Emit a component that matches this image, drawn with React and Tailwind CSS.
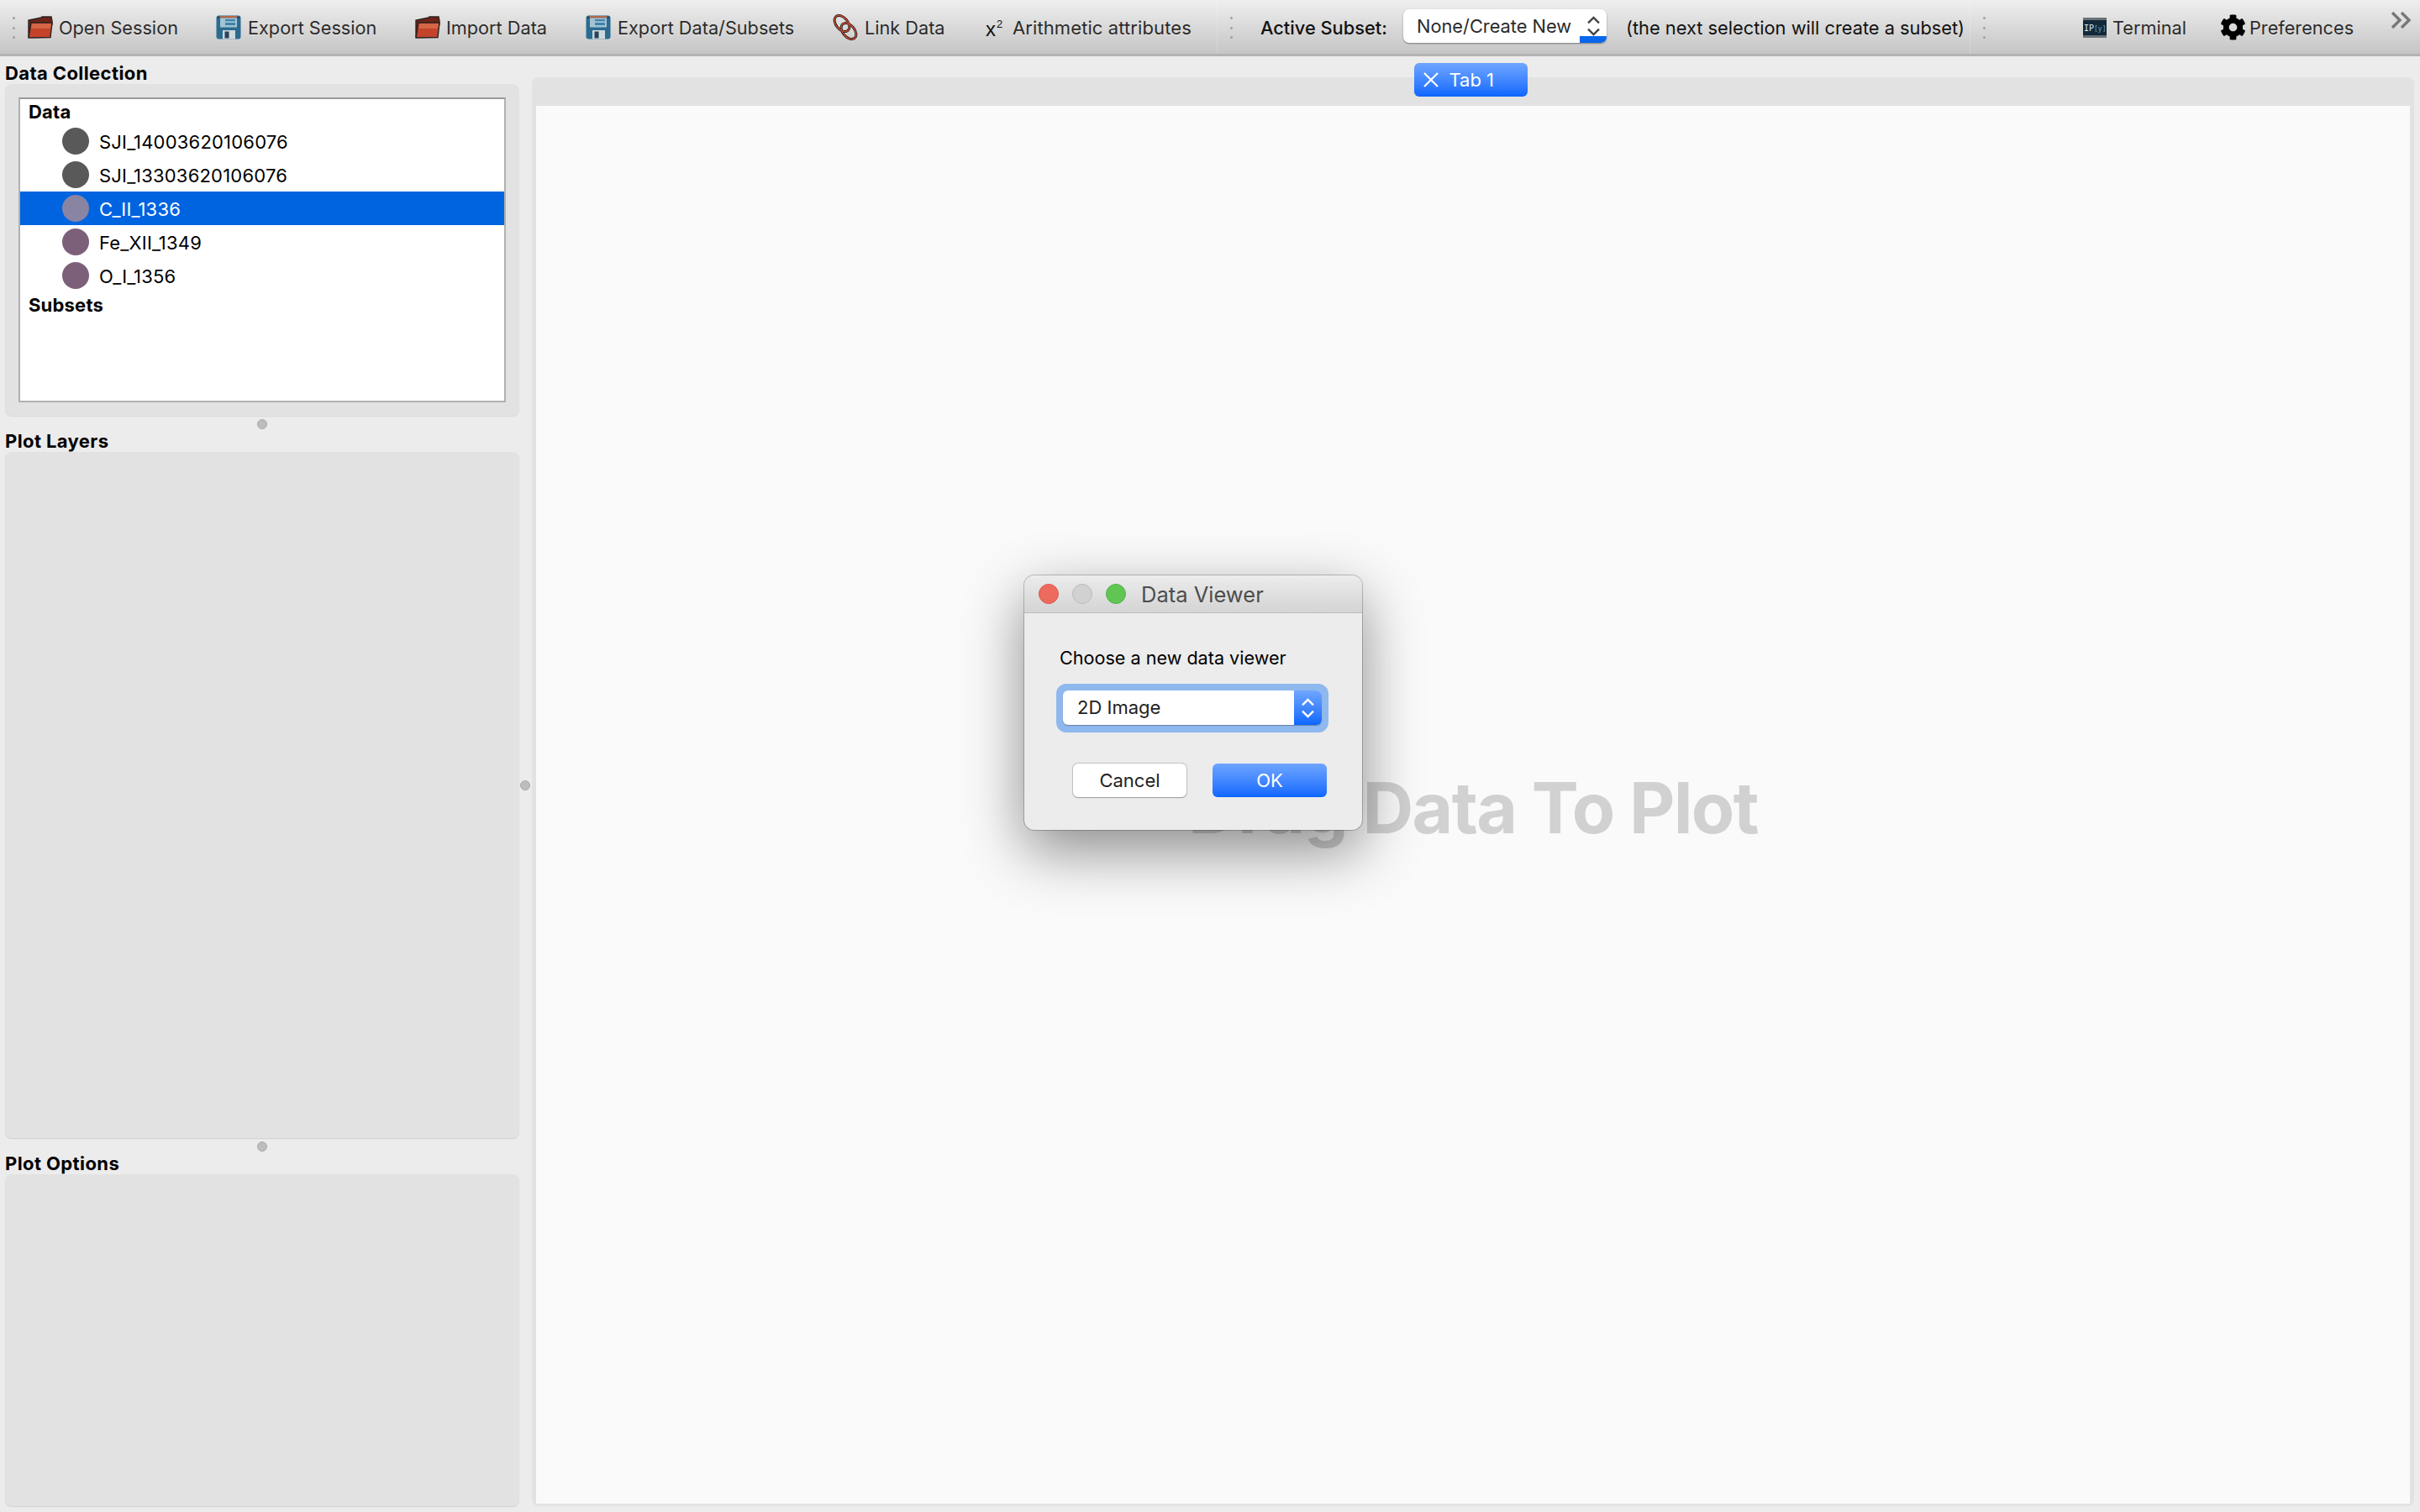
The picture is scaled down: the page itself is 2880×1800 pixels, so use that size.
import { FaCog } from "react-icons/fa";

const DATASETS = [
  { name: "SJI_14003620106076", color: "bg-[#595959]" },
  { name: "SJI_13303620106076", color: "bg-[#595959]" },
  { name: "C_II_1336", color: "bg-[#8a84a3]", selected: true },
  { name: "Fe_XII_1349", color: "bg-[#7c6079]" },
  { name: "O_I_1356", color: "bg-[#7c6079]" },
];

function FolderIcon() {
  return (
    <svg width="30" height="27" viewBox="0 0 30 27" className="shrink-0">
      <path d="M1 25V5l15-3 1-1h11l1 5v4H5z" fill="#6e2317" stroke="#2b2321" strokeWidth="1.4" />
      <path d="M4 8h25l-2 17.5L1 26z" fill="#c4432a" stroke="#2b2321" strokeWidth="1.4" />
      <path d="M5 9h23l-1 6H4z" fill="#d9704f" opacity="0.75" />
    </svg>
  );
}

function FloppyIcon() {
  return (
    <svg width="30" height="29" viewBox="0 0 30 29" className="shrink-0">
      <rect x="0.5" y="0.5" width="29" height="28" rx="3" fill="#2c6b90" />
      <rect x="5" y="1" width="20" height="2.5" fill="#b5694a" />
      <rect x="5" y="3.5" width="20" height="11" fill="#a3c3d4" />
      <rect x="11" y="5" width="12" height="7" fill="#3f83aa" />
      <rect x="11" y="7.5" width="12" height="1.2" fill="#cfe0e8" />
      <rect x="8" y="18" width="15" height="10.5" fill="#cfd8dc" />
      <rect x="10.5" y="19.5" width="5" height="8" fill="#26435a" />
      <circle cx="3" cy="3" r="1" fill="#173a50" />
      <circle cx="27" cy="3" r="1" fill="#173a50" />
    </svg>
  );
}

function LinkIcon() {
  return (
    <svg width="32" height="32" viewBox="0 0 32 32" className="shrink-0">
      <ellipse cx="12" cy="11" rx="7" ry="11" transform="rotate(-40 12 11)" fill="none" stroke="#2a2320" strokeWidth="3" />
      <ellipse cx="20" cy="20" rx="7" ry="11" transform="rotate(-40 20 20)" fill="none" stroke="#2a2320" strokeWidth="3" />
      <ellipse cx="12" cy="11" rx="7" ry="11" transform="rotate(-40 12 11)" fill="none" stroke="#cf4a2e" strokeWidth="1.3" />
      <ellipse cx="20" cy="20" rx="7" ry="11" transform="rotate(-40 20 20)" fill="none" stroke="#cf4a2e" strokeWidth="1.3" />
    </svg>
  );
}

function IPythonIcon() {
  return (
    <svg width="28" height="24" viewBox="0 0 28 24" className="shrink-0">
      <rect width="28" height="24" fill="#12293a" />
      <rect width="28" height="3" fill="#6b7276" />
      <rect y="21" width="28" height="3" fill="#6b7276" />
      <text x="1" y="16" fontFamily="'DejaVu Sans Mono', monospace" fontSize="10" fill="#dfe6ea">IP</text>
      <text x="13" y="16" fontFamily="'DejaVu Sans Mono', monospace" fontSize="8" fill="#6fa5c8">[y]:</text>
    </svg>
  );
}

function UpDown({ className }) {
  return (
    <svg width="15" height="24" viewBox="2 1 16 26" fill="none" stroke="currentColor" strokeWidth="2.6" className={className}>
      <path d="M3 10l7-7 7 7" />
      <path d="M3 18l7 7 7-7" />
    </svg>
  );
}

function Grip() {
  return (
    <div className="flex h-[26px] w-[4px] shrink-0 flex-col items-center justify-between">
      <span className="h-[3px] w-[3px] rounded-full bg-[#a0a0a0]" />
      <span className="h-[3px] w-[3px] rounded-full bg-[#a0a0a0]" />
      <span className="h-[3px] w-[3px] rounded-full bg-[#a0a0a0]" />
    </div>
  );
}

function ToolButton({ icon, label, className = "", gap = "gap-[7px]", width }) {
  return (
    <div className={`flex shrink-0 items-center ${gap} ${className}`}>
      {icon}
      <span className={`whitespace-nowrap text-[21.7px] text-[#2b2b2b] [text-shadow:0_1px_0_rgba(255,255,255,0.35)] ${width}`}>
        {label}
      </span>
    </div>
  );
}

function Toolbar() {
  return (
    <header className="flex h-[67px] shrink-0 border-b-[3px] border-[#b3b3b3] bg-gradient-to-b from-[#efefef] to-[#c5c5c5]">
      <div className="flex w-[1449px] shrink-0 items-center border-r border-white/20 pl-[14px] pt-[2px]">
        <Grip />
        <ToolButton icon={<FolderIcon />} label="Open Session" width="w-[142px]" className="ml-[15px]" />
        <ToolButton icon={<FloppyIcon />} label="Export Session" width="w-[153px]" gap="gap-[8px]" className="ml-[45px]" />
        <ToolButton icon={<FolderIcon />} label="Import Data" width="w-[121px]" className="ml-[46px]" />
        <ToolButton icon={<FloppyIcon />} label="Export Data/Subsets" width="w-[212px]" gap="gap-[8px]" className="ml-[45px]" />
        <ToolButton icon={<LinkIcon />} label="Link Data" width="w-[93px]" className="ml-[43px]" />
        <div className="ml-[51px] flex shrink-0 items-center">
          <span className="flex h-[30px] w-[21px] items-end text-[24px] leading-[26px] text-[#111] [font-family:'Liberation_Sans',sans-serif]">
            x<span className="-translate-y-[13px] pl-[1px] text-[13px] leading-none">2</span>
          </span>
          <span className="ml-[11px] whitespace-nowrap text-[22px] tracking-[0.1px] text-[#2b2b2b] [text-shadow:0_1px_0_rgba(255,255,255,0.35)]">
            Arithmetic attributes
          </span>
        </div>
      </div>
      <div className="flex w-[896px] shrink-0 items-center border-r border-white/20 pl-[14px] pt-[2px]">
        <Grip />
        <span className="ml-[33px] w-[149px] shrink-0 whitespace-nowrap text-[21.8px] font-medium text-[#111]">Active Subset:</span>
        <div className="relative ml-[21px] flex h-[40px] w-[242px] shrink-0 -translate-y-[2px] items-center overflow-hidden rounded-[7px] bg-white pl-[16px] shadow-[0_1px_2px_rgba(0,0,0,0.4)]">
          <span className="whitespace-nowrap text-[21.8px] text-[#2b2b2b]">None/Create New</span>
          <span className="absolute bottom-0 right-0 h-[8px] w-[32px] bg-[#0a66ec]" />
          <UpDown className="relative ml-auto mr-[8px] text-[#444]" />
        </div>
        <span className="ml-[23px] w-[404px] shrink-0 whitespace-nowrap text-[21.8px] text-[#111]">(the next selection will create a subset)</span>
      </div>
      <div className="relative flex min-w-0 flex-1 items-center pl-[14px] pt-[2px]">
        <Grip />
        <ToolButton icon={<IPythonIcon />} label="Terminal" width="w-[85px]" className="ml-[116px]" />
        <ToolButton icon={<FaCog className="h-[31px] w-[31px] text-black" />} label="Preferences" width="w-[125px]" gap="gap-[4px]" className="ml-[43px]" />
        <svg width="28" height="20" viewBox="0 0 28 20" fill="none" stroke="#777" strokeWidth="3.4" className="absolute right-[8px] top-[14px]">
          <path d="M3 1l9 9-9 9M14 1l9 9-9 9" />
        </svg>
      </div>
    </header>
  );
}

function SectionTitle({ children, className = "" }) {
  return <h2 className={`text-[22px] leading-[26px] font-bold tracking-[0.4px] text-black ${className}`}>{children}</h2>;
}

function Handle() {
  return (
    <div className="flex h-[20px] shrink-0 items-center justify-center">
      <span className="h-[12px] w-[12px] rounded-full border border-[#aaa] bg-[#bdbdbd]" />
    </div>
  );
}

function DataList() {
  return (
    <div className="h-[363px] border-2 border-[#b0b0b0] border-t-[#999] bg-white">
      <div className="flex h-[30px] items-center pl-[10px] text-[22px] leading-[26px] font-bold tracking-[0.2px] text-black">Data</div>
      <ul>
        {DATASETS.map((item) => (
          <li
            key={item.name}
            className={`flex h-[40px] items-center pl-[50px] text-[22px] tracking-[0.2px] ${item.selected ? "bg-[#0064e1] text-white" : "text-black"}`}
          >
            <span className={`h-[32px] w-[32px] rounded-full ${item.color}`} />
            <span className="ml-[12px] pt-[2px]">{item.name}</span>
          </li>
        ))}
      </ul>
      <div className="mt-[2px] pl-[10px] text-[22px] leading-[26px] font-bold tracking-[0.2px] text-black">Subsets</div>
    </div>
  );
}

function Sidebar() {
  return (
    <aside className="flex w-[618px] shrink-0 flex-col pl-[6px] pt-[7px]">
      <SectionTitle>Data Collection</SectionTitle>
      <section className="h-[395px] shrink-0 rounded-[8px] bg-[#e2e2e2] px-[16px] pt-[16px] shadow-[0_1px_1px_rgba(0,0,0,0.08)]">
        <DataList />
      </section>
      <Handle />
      <SectionTitle className="-mt-[3px]">Plot Layers</SectionTitle>
      <section className="h-[817px] shrink-0 rounded-[8px] bg-[#e2e2e2] shadow-[0_1px_1px_rgba(0,0,0,0.12)]" />
      <Handle />
      <SectionTitle className="-mt-[3px]">Plot Options</SectionTitle>
      <section className="h-[395px] shrink-0 rounded-[8px] bg-[#e2e2e2] shadow-[0_1px_1px_rgba(0,0,0,0.12)]" />
    </aside>
  );
}

function Workspace() {
  return (
    <main className="flex min-w-0 flex-1 pb-[7px] pl-[15px] pr-[7px] pt-[25px]">
      <div className="flex min-w-0 flex-1 flex-col rounded-[8px] bg-[#e2e2e2] px-[5px] pb-[3px]">
        <div className="flex h-[34px] shrink-0 justify-center">
          <div className="-mt-[17px] ml-[-6px] flex h-[40px] w-[135px] items-center rounded-[6px] bg-gradient-to-b from-[#6ea5ff] to-[#0a66ff] pl-[10px] text-white">
            <svg width="20" height="20" viewBox="0 0 20 20" stroke="currentColor" strokeWidth="2.2">
              <path d="M2 2l16 16M18 2L2 18" />
            </svg>
            <span className="ml-[12px] text-[22px]">Tab 1</span>
          </div>
        </div>
        <div className="flex min-h-0 flex-1 items-center justify-center bg-[#fafafa] pt-[7px]">
          <span className="whitespace-nowrap text-[84px] leading-none font-bold tracking-[-1.6px] text-[#d1d1d1]">Drag Data To Plot</span>
        </div>
      </div>
    </main>
  );
}

function DataViewerDialog() {
  return (
    <div className="absolute left-[1219px] top-[685px] flex h-[303px] w-[402px] flex-col overflow-hidden rounded-[12px] bg-[#ececec] shadow-[0_0_0_1px_rgba(0,0,0,0.22),0_24px_70px_rgba(0,0,0,0.45)]">
      <div className="flex h-[45px] shrink-0 items-center border-b border-[#bdbdbd] bg-gradient-to-b from-[#ececec] to-[#d4d4d4] pl-[17px]">
        <span className="h-[24px] w-[24px] rounded-full border border-[#dd5a50] bg-[#ed6a5f]" />
        <span className="ml-[16px] h-[24px] w-[24px] rounded-full border border-[#bcbcbc] bg-[#d1d1d1]" />
        <span className="ml-[16px] h-[24px] w-[24px] rounded-full border border-[#54b14b] bg-[#61c554]" />
        <span className="ml-[18px] pt-[2px] text-[25.5px] text-[#4d4d4d]">Data Viewer</span>
      </div>
      <div className="flex flex-1 flex-col pl-[38px]">
        <p className="ml-[4px] mt-[38px] text-[21.6px] leading-[30px] text-black">Choose a new data viewer</p>
        <div className="mt-[16px] h-[58px] w-[324px] rounded-[12px] bg-[#8fb8ef] p-[8px]">
          <div className="flex h-[41px] overflow-hidden rounded-[6px] bg-white shadow-[0_1px_1px_rgba(0,0,0,0.3)]">
            <span className="flex flex-1 items-center pl-[17px] text-[22px] text-[#222]">2D Image</span>
            <span className="flex w-[33px] items-center justify-center bg-gradient-to-b from-[#6ea5ff] to-[#0a66ff] text-white">
              <UpDown />
            </span>
          </div>
        </div>
        <div className="mt-[37px] flex pl-[20px]">
          <button type="button" className="h-[40px] w-[135px] rounded-[6px] bg-white text-[22px] text-[#222] shadow-[0_0_1px_1px_rgba(0,0,0,0.18),0_1px_1px_rgba(0,0,0,0.2)]">
            Cancel
          </button>
          <button type="button" className="ml-[31px] h-[40px] w-[136px] rounded-[6px] bg-gradient-to-b from-[#6ea5ff] to-[#0a66ff] text-[22px] text-white">
            OK
          </button>
        </div>
      </div>
    </div>
  );
}

export default function App() {
  return (
    <div className="relative flex h-[1800px] w-[2880px] flex-col overflow-hidden bg-[#ececec] [font-family:Inter,'Noto_Sans',sans-serif]">
      <Toolbar />
      <div className="flex min-h-0 flex-1">
        <Sidebar />
        <Workspace />
      </div>
      <span className="absolute left-[619px] top-[929px] h-[12px] w-[12px] rounded-full border border-[#aaa] bg-[#bdbdbd]" />
      <DataViewerDialog />
    </div>
  );
}
